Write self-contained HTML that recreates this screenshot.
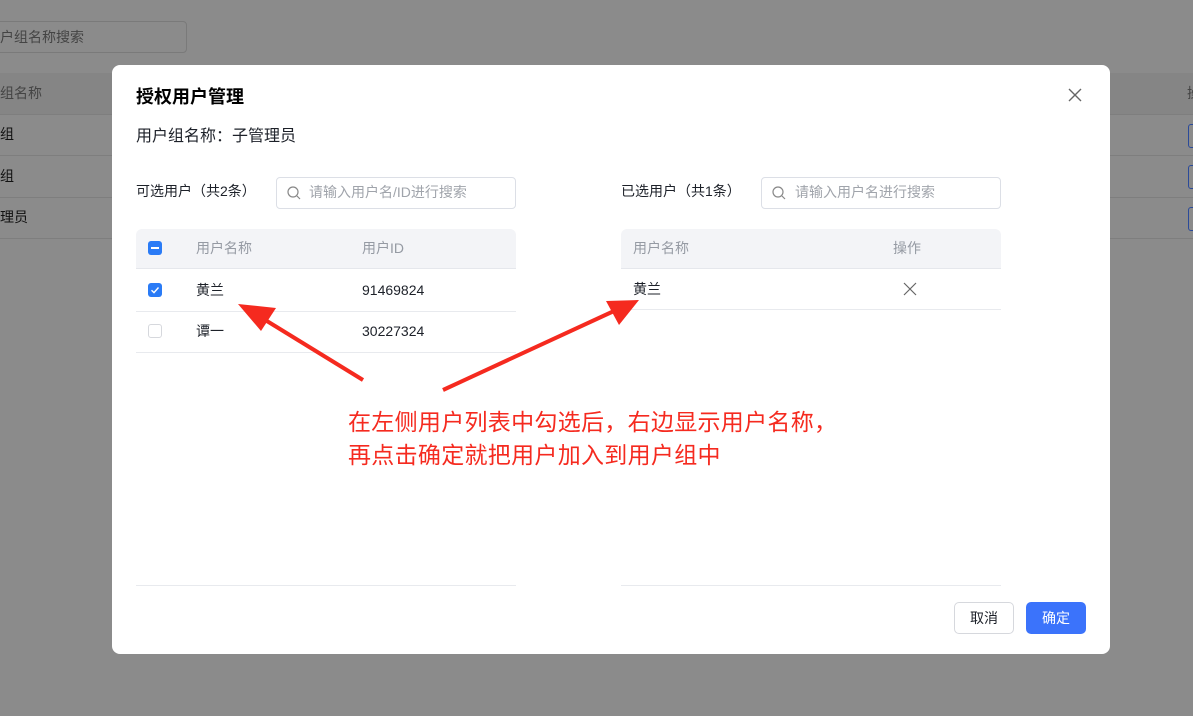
<!DOCTYPE html>
<html><head><meta charset="utf-8"><style>
*{margin:0;padding:0;box-sizing:border-box}
body{width:1193px;height:716px;overflow:hidden;position:relative;background:#8b8b8b;font-family:"Liberation Sans","Noto Sans CJK SC",sans-serif;font-size:14px;color:#1d2129;line-height:20px}
.a{position:absolute}
.bgt{color:#111;font-size:14px}
</style></head><body>
<div class="a" style="left:-10px;top:21px;width:197px;height:32px;border:1px solid #7a7a7a;border-radius:4px"></div>
<div class="a" style="left:0;top:27px;color:#444;font-size:14px">户组名称搜索</div>
<div class="a" style="left:0;top:73px;width:1193px;height:42px;background:#858585;border-bottom:1px solid #7e7e7e"></div>
<div class="a" style="left:0;top:83px;color:#444">组名称</div>
<div class="a bgt" style="left:0;top:124px">组</div>
<div class="a" style="left:0;top:155px;width:1193px;height:1px;background:#7e7e7e"></div>
<div class="a bgt" style="left:0;top:166px">组</div>
<div class="a" style="left:0;top:197px;width:1193px;height:1px;background:#7e7e7e"></div>
<div class="a bgt" style="left:0;top:207px">理员</div>
<div class="a" style="left:0;top:238px;width:1193px;height:1px;background:#7e7e7e"></div>
<div class="a" style="left:1188px;top:124px;width:10px;height:24px;border:1px solid #2a4a9a;border-radius:3px"></div>
<div class="a" style="left:1188px;top:165px;width:10px;height:24px;border:1px solid #2a4a9a;border-radius:3px"></div>
<div class="a" style="left:1188px;top:207px;width:10px;height:24px;border:1px solid #2a4a9a;border-radius:3px"></div>
<div class="a" style="left:1187px;top:83px;color:#444">操</div>

<div class="a" style="left:112px;top:65px;width:998px;height:589px;background:#fff;border-radius:8px"></div>
<div class="a" style="left:136px;top:84px;font-size:18px;font-weight:bold;color:#000;line-height:26px">授权用户管理</div>
<svg class="a" style="left:1067px;top:87px" width="16" height="16"><path d="M2 2L14 14M14 2L2 14" stroke="#666" stroke-width="1.4"/></svg>
<div class="a" style="left:136px;top:126px;font-size:16px;line-height:22px">用户组名称：子管理员</div>

<div class="a" style="left:136px;top:181px">可选用户（共2条）</div>
<div class="a" style="left:276px;top:177px;width:240px;height:32px;border:1px solid #dcdfe6;border-radius:4px"></div>
<svg class="a" style="left:287px;top:186px" width="14" height="14"><circle cx="6" cy="6" r="5" fill="none" stroke="#888" stroke-width="1.2"/><path d="M10 10L13 13" stroke="#888" stroke-width="1.2"/></svg>
<div class="a" style="left:309px;top:182px;color:#a0a4ab">请输入用户名/ID进行搜索</div>
<div class="a" style="left:136px;top:229px;width:380px;height:40px;background:#f3f4f7;border-radius:6px 6px 0 0;border-bottom:1px solid #e5e7ec"></div>
<div class="a" style="left:148px;top:241px;width:14px;height:14px;background:#2a7bf6;border-radius:3px"></div>
<div class="a" style="left:151px;top:247px;width:8px;height:2px;background:#fff"></div>
<div class="a" style="left:196px;top:238px;color:#959aa3">用户名称</div>
<div class="a" style="left:362px;top:238px;color:#959aa3">用户ID</div>
<div class="a" style="left:148px;top:283px;width:14px;height:14px;background:#2a7bf6;border-radius:3px"></div>
<svg class="a" style="left:148px;top:283px" width="14" height="14"><path d="M3.5 7.2L6 9.6L10.5 4.5" fill="none" stroke="#fff" stroke-width="1.4"/></svg>
<div class="a" style="left:196px;top:280px">黄兰</div>
<div class="a" style="left:362px;top:280px">91469824</div>
<div class="a" style="left:136px;top:311px;width:380px;height:1px;background:#e8eaee"></div>
<div class="a" style="left:148px;top:324px;width:14px;height:14px;border:1px solid #d6d8dd;border-radius:3px"></div>
<div class="a" style="left:196px;top:321px">谭一</div>
<div class="a" style="left:362px;top:321px">30227324</div>
<div class="a" style="left:136px;top:352px;width:380px;height:1px;background:#e8eaee"></div>
<div class="a" style="left:136px;top:585px;width:380px;height:1px;background:#e8eaee"></div>

<div class="a" style="left:621px;top:181px">已选用户（共1条）</div>
<div class="a" style="left:761px;top:177px;width:240px;height:32px;border:1px solid #dcdfe6;border-radius:4px"></div>
<svg class="a" style="left:772px;top:186px" width="14" height="14"><circle cx="6" cy="6" r="5" fill="none" stroke="#888" stroke-width="1.2"/><path d="M10 10L13 13" stroke="#888" stroke-width="1.2"/></svg>
<div class="a" style="left:795px;top:182px;color:#a0a4ab">请输入用户名进行搜索</div>
<div class="a" style="left:621px;top:229px;width:380px;height:40px;background:#f3f4f7;border-radius:6px 6px 0 0;border-bottom:1px solid #e5e7ec"></div>
<div class="a" style="left:633px;top:238px;color:#959aa3">用户名称</div>
<div class="a" style="left:893px;top:238px;color:#959aa3">操作</div>
<div class="a" style="left:633px;top:279px">黄兰</div>
<svg class="a" style="left:903px;top:282px" width="14" height="14"><path d="M1 1L13 13M13 1L1 13" stroke="#666" stroke-width="1.2"/></svg>
<div class="a" style="left:621px;top:309px;width:380px;height:1px;background:#e8eaee"></div>
<div class="a" style="left:621px;top:585px;width:380px;height:1px;background:#e8eaee"></div>

<div class="a" style="left:954px;top:602px;width:60px;height:32px;border:1px solid #d6d8dd;border-radius:5px;text-align:center;line-height:30px">取消</div>
<div class="a" style="left:1026px;top:602px;width:60px;height:32px;background:#3b73fb;color:#fff;border-radius:5px;text-align:center;line-height:32px">确定</div>

<svg class="a" style="left:0;top:0" width="1193" height="716">
<path d="M363 380L262 318" stroke="#f52a1f" stroke-width="4"/>
<polygon points="238,304 276,308 261,331" fill="#f52a1f"/>
<path d="M443 390L614 311" stroke="#f52a1f" stroke-width="4"/>
<polygon points="639,300 619,325 606,301" fill="#f52a1f"/>
</svg>
<div class="a" style="left:348px;top:406px;color:#f52a1f;font-size:23px;line-height:33px;letter-spacing:0.3px">在左侧用户列表中勾选后，右边显示用户名称，<br>再点击确定就把用户加入到用户组中</div>
</body></html>
